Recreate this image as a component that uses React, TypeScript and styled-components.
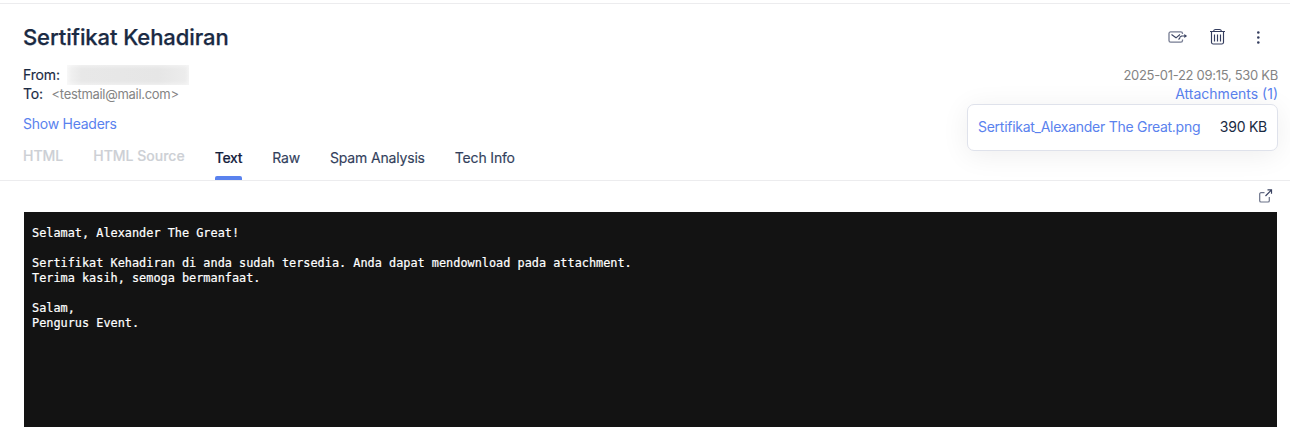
import React from 'react';
import styled, { createGlobalStyle } from 'styled-components';

const GlobalStyle = createGlobalStyle`
  * { box-sizing: border-box; }
  body {
    margin: 0;
    background: #fff;
    overflow: hidden;
    font-family: Inter, 'Liberation Sans', sans-serif;
    font-size: 14px;
    line-height: 19px;
    color: #1a2a43;
  }
`;

const Page = styled.main`
  height: 427px;
  display: flex;
  flex-direction: column;
  padding-top: 3px;
`;

const Header = styled.header`
  height: 178px;
  flex: none;
  display: flex;
  justify-content: space-between;
  border-top: 1px solid #ececee;
  border-bottom: 1px solid #ececee;
  padding: 0 12px 0 23px;
`;

const Summary = styled.div`
  display: flex;
  flex-direction: column;
`;

const Title = styled.h1`
  margin: 19px 0 0;
  font-size: 22px;
  line-height: 28px;
  font-weight: 500;
  letter-spacing: -0.09px;
  -webkit-text-stroke: 0.25px currentColor;
  white-space: nowrap;
`;

const AddressList = styled.div`
  margin-top: 14px;
`;

const AddressRow = styled.div`
  display: flex;
  height: 19px;
  align-items: center;
`;

const Label = styled.span<{ $width: number }>`
  width: ${(p) => p.$width}px;
  letter-spacing: -0.15px;
  -webkit-text-stroke: 0.15px currentColor;
`;

const Address = styled.span`
  font-size: 13px;
  letter-spacing: -0.3px;
  padding-top: 1px;
  color: #848484;
`;

const Redacted = styled.span`
  width: 122px;
  height: 20px;
  margin-top: 1px;
  background: linear-gradient(90deg, #f3f3f3, #e8e8e8 12%, #e6e6e6 75%, #ededed);
  box-shadow: inset 0 0 4px 1px rgba(255, 255, 255, 0.55);
`;

const TextLink = styled.a<{ $spacing?: number }>`
  color: #5a82ee;
  letter-spacing: ${(p) => p.$spacing ?? 0}px;
  white-space: nowrap;
`;

const HeadersToggle = styled.div`
  margin-top: 11px;
`;

const Tabs = styled.nav`
  display: flex;
  gap: 30px;
  margin-top: 13px;
  height: 35px;
`;

const Tab = styled.span<{ $state?: 'active' | 'disabled' }>`
  position: relative;
  white-space: nowrap;
  padding-top: ${(p) => (p.$state === 'disabled' ? 0 : 2)}px;
  font-weight: ${(p) => (p.$state ? 500 : 400)};
  letter-spacing: ${(p) => (p.$state === 'disabled' ? 0 : p.$state === 'active' ? -0.3 : -0.17)}px;
  -webkit-text-stroke: 0.15px currentColor;
  color: ${(p) => (p.$state === 'disabled' ? '#cdd0d5' : p.$state === 'active' ? '#14213d' : '#333f5c')};
  &::after {
    content: '';
    display: ${(p) => (p.$state === 'active' ? 'block' : 'none')};
    position: absolute;
    left: 0;
    right: 0;
    bottom: 0;
    height: 4px;
    border-radius: 2px 2px 0 0;
    background: #5a82ee;
  }
`;

const Side = styled.div`
  display: flex;
  flex-direction: column;
  align-items: flex-end;
`;

const Actions = styled.div`
  display: flex;
  align-items: center;
  margin-top: 23px;
  height: 20px;
  gap: 20px;
  padding-right: 10px;
`;

const Meta = styled.div`
  margin-top: 19px;
  font-size: 13px;
  letter-spacing: -0.3px;
  color: #848484;
`;

const AttachmentsLink = styled(TextLink)`
  line-height: 17px;
  height: 19px;
`;

const Attachment = styled.div`
  display: flex;
  align-items: center;
  justify-content: space-between;
  width: 311px;
  height: 47px;
  padding: 0 10px 2px;
  border: 1px solid #dfe2eb;
  border-radius: 7px;
  background: #fff;
  box-shadow: 0 4px 28px rgba(0, 0, 0, 0.07);
`;

const FileSize = styled.span`
  letter-spacing: -0.25px;
`;

const Viewer = styled.section`
  flex: 1;
  display: flex;
  flex-direction: column;
  padding: 0 13px 0 24px;
`;

const ViewerBar = styled.div`
  height: 31px;
  display: flex;
  justify-content: flex-end;
  align-items: center;
  padding: 0 4px 2px 0;
`;

const Message = styled.pre`
  flex: 1;
  margin: 0;
  padding: 14px 8px;
  background: #131313;
  color: #fff;
  font-family: 'DejaVu Sans Mono', monospace;
  font-size: 11.875px;
  line-height: 15px;
  -webkit-text-stroke: 0.2px #fff;
`;

const body = `Selamat, Alexander The Great!

Sertifikat Kehadiran di anda sudah tersedia. Anda dapat mendownload pada attachment.
Terima kasih, semoga bermanfaat.

Salam,
Pengurus Event.`;

const ForwardIcon = () => (
  <svg width="20" height="20" viewBox="0 0 20 20" fill="none" stroke="#3a4362">
    <path d="M14.5 7V6.5a1.6 1.6 0 0 0-1.6-1.6H2.6A1.6 1.6 0 0 0 1 6.5v7a1.6 1.6 0 0 0 1.6 1.6h10.3a1.6 1.6 0 0 0 1.6-1.6v-1" strokeOpacity=".7" strokeWidth="1.3" />
    <path d="M3.5 7.5 8 10.8 12 7.5M10.5 12.5l1.500-1.500M11.500 10.500l2-1.500H18" strokeWidth="1.1" />
    <path d="m16.3 7 2.800 2-2.800 2z" fill="#3a4362" stroke="none" />
  </svg>
);

const TrashIcon = () => (
  <svg width="20" height="20" viewBox="0 0 20 20" fill="none" stroke="#343d5e" strokeWidth="1.15">
    <path d="M2 4.5h15M5.5 4.3c.3-1.2.8-1.8 2-1.8h4c1.2 0 1.7.6 2 1.8M3.5 4.5V15.5a1.7 1.7 0 0 0 1.7 1.5h8.600a1.7 1.7 0 0 0 1.700-1.500V4.500M6.500 7.500v7M9.500 7.500v7M12.500 7.500v7" />
  </svg>
);

const MoreIcon = () => (
  <svg width="20" height="20" viewBox="0 0 20 20" fill="#343d5e">
    <circle cx="10.3" cy="5.5" r="1.3" />
    <circle cx="10.3" cy="10.5" r="1.3" />
    <circle cx="10.3" cy="15.5" r="1.3" />
  </svg>
);

const OpenIcon = () => (
  <svg width="14" height="14" viewBox="0 0 14 14" fill="none" stroke="#3a4362" strokeWidth="1.2">
    <path d="M5.5 3.7H2A1.3 1.3 0 0 0 .7 5v6.7A1.3 1.3 0 0 0 2 13h7a1.3 1.3 0 0 0 1.3-1.3V8" strokeOpacity=".75" />
    <path d="M6.5 7 12.3 1.2M8.500.8h4v4" />
  </svg>
);

export default function App() {
  return (
    <Page>
      <GlobalStyle />
      <Header>
        <Summary>
          <Title>Sertifikat Kehadiran</Title>
          <AddressList>
            <AddressRow>
              <Label $width={44}>From:</Label>
              <Redacted />
            </AddressRow>
            <AddressRow>
              <Label $width={28.5}>To:</Label>
              <Address>&lt;testmail@mail.com&gt;</Address>
            </AddressRow>
          </AddressList>
          <HeadersToggle>
            <TextLink $spacing={-0.25}>Show Headers</TextLink>
          </HeadersToggle>
          <Tabs>
            <Tab $state="disabled">HTML</Tab>
            <Tab $state="disabled">HTML Source</Tab>
            <Tab $state="active">Text</Tab>
            <Tab>Raw</Tab>
            <Tab>Spam Analysis</Tab>
            <Tab>Tech Info</Tab>
          </Tabs>
        </Summary>
        <Side>
          <Actions>
            <ForwardIcon />
            <TrashIcon />
            <MoreIcon />
          </Actions>
          <Meta>2025-01-22 09:15, 530 KB</Meta>
          <AttachmentsLink>Attachments (1)</AttachmentsLink>
          <Attachment>
            <TextLink $spacing={-0.27}>Sertifikat_Alexander The Great.png</TextLink>
            <FileSize>390 KB</FileSize>
          </Attachment>
        </Side>
      </Header>
      <Viewer>
        <ViewerBar>
          <OpenIcon />
        </ViewerBar>
        <Message>{body}</Message>
      </Viewer>
    </Page>
  );
}
